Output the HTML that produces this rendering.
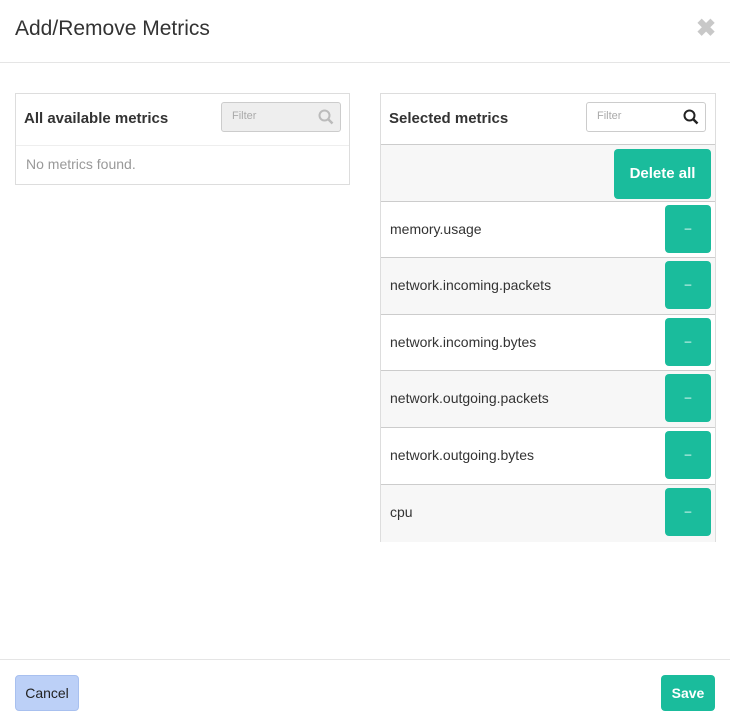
<!DOCTYPE html>
<html><head><style>
*{box-sizing:border-box;margin:0;padding:0}
body{width:730px;height:726px;background:#fff;font-family:"Liberation Sans Narrow","Liberation Sans",sans-serif;color:#222;position:relative;overflow:hidden}
.abs{position:absolute}
.title{left:15px;top:17px;font-size:21px;color:#333}
.close{left:696px;top:14px;font-size:24px;color:#c8c8c8;font-weight:bold}
.hr{left:0;width:730px;height:1px;background:#e5e5e5}
.panel{border:1px solid #ddd}
.ph{font-size:15px;font-weight:bold;color:#333}
.filter{border:1px solid #ccc;border-radius:3px;font-size:11px;color:#aaa;padding:7px 10px}
.row{left:381px;width:334px;border-top:1px solid #ccc;font-size:14px;color:#333}
.row span{position:absolute;left:9px;top:19px}
.btn{background:#1abc9c;border-radius:4px;color:#fff}
.minus{position:absolute;left:284px;top:3px;width:46px;height:48px;background:#1abc9c;border-radius:4px;color:#fff;text-align:center;line-height:46px;font-size:12px}
</style></head><body>
<div class="abs title">Add/Remove Metrics</div>
<div class="abs close">✖</div>
<div class="abs hr" style="top:62px"></div>

<div class="abs panel" style="left:15px;top:93px;width:335px;height:92px"></div>
<div class="abs" style="left:16px;top:145px;width:333px;height:1px;background:#eee"></div>
<div class="abs ph" style="left:24px;top:110px">All available metrics</div>
<div class="abs filter" style="left:221px;top:102px;width:120px;height:30px;background:#eee">Filter</div>
<svg class="abs" style="left:318px;top:109px" width="16" height="16" viewBox="0 0 16 16"><circle cx="6.5" cy="6.5" r="5" fill="none" stroke="#bbb" stroke-width="2"/><path d="M10 10l4.5 4.5" stroke="#bbb" stroke-width="2.5"/></svg>
<div class="abs" style="left:26px;top:156px;font-size:14px;color:#999">No metrics found.</div>

<div class="abs panel" style="left:380px;top:93px;width:336px;height:449px;border-bottom:none"></div>
<div class="abs ph" style="left:389px;top:110px">Selected metrics</div>
<div class="abs filter" style="left:586px;top:102px;width:120px;height:30px;background:#fff">Filter</div>
<svg class="abs" style="left:683px;top:109px" width="16" height="16" viewBox="0 0 16 16"><circle cx="6.5" cy="6.5" r="5" fill="none" stroke="#222" stroke-width="2"/><path d="M10 10l4.5 4.5" stroke="#222" stroke-width="2.5"/></svg>

<div class="abs row" style="top:144px;height:58px;background:#f7f7f7"><div class="btn" style="position:absolute;left:233px;top:4px;width:97px;height:50px;text-align:center;line-height:50px;font-size:15px;font-weight:bold">Delete all</div></div>
<div class="abs row" style="top:201px;height:57px;background:#fff"><span>memory.usage</span><div class="minus">–</div></div>
<div class="abs row" style="top:257px;height:58px;background:#f7f7f7"><span>network.incoming.packets</span><div class="minus">–</div></div>
<div class="abs row" style="top:314px;height:57px;background:#fff"><span>network.incoming.bytes</span><div class="minus">–</div></div>
<div class="abs row" style="top:370px;height:58px;background:#f7f7f7"><span>network.outgoing.packets</span><div class="minus">–</div></div>
<div class="abs row" style="top:427px;height:58px;background:#fff"><span>network.outgoing.bytes</span><div class="minus">–</div></div>
<div class="abs row" style="top:484px;height:58px;background:#f7f7f7"><span>cpu</span><div class="minus">–</div></div>

<div class="abs hr" style="top:659px"></div>
<div class="abs" style="left:15px;top:675px;width:64px;height:36px;background:#bcd0f7;border:1px solid #a8c0ef;border-radius:4px;text-align:center;line-height:34px;font-size:14px;color:#222">Cancel</div>
<div class="abs btn" style="left:661px;top:675px;width:54px;height:36px;text-align:center;line-height:36px;font-size:14px;font-weight:bold">Save</div>
</body></html>
